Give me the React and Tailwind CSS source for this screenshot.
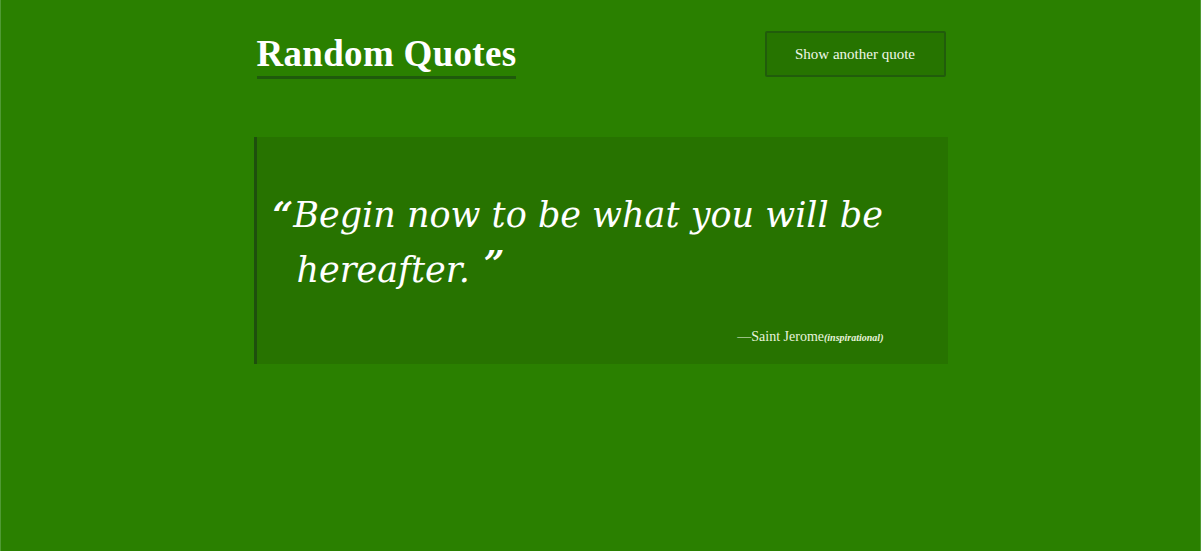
import React from "react";

const quote = {
    text: "Begin now to be what you will be hereafter.",
    author: "Saint Jerome",
    category: "inspirational",
};

const App = () => {
    return (
        <div className="min-h-[551px] w-full bg-[#2a8000] border-x border-[#4f9a33] font-['Liberation_Serif',serif] text-white">
            <div className="mx-auto w-[694px] pt-[31px]">
                <header className="flex items-start justify-between">
                    <h1 className="ml-[3px] mt-[3px] border-b-[3px] border-[#1f5a0c] pb-[2px] text-[37px] font-bold leading-[40px] tracking-[0.3px]">
                        Random Quotes
                    </h1>
                    <button className="mr-[2px] h-[46px] w-[181px] rounded-[2px] border-2 border-[#215c0b] bg-[#267400] text-[15px] text-[#f0f8e8]">
                        Show another quote
                    </button>
                </header>

                <blockquote className="mt-[58px] h-[227px] border-l-[3px] border-[#1e4f0d] bg-[#277300] pl-[40px] pr-[20px] pt-[53px]">
                    <p className="-indent-[24px] text-[35px] italic leading-[48px] font-['DejaVu_Serif',serif]">
                        <span className="text-[36px] font-bold">&ldquo;</span>
                        {quote.text}
                        <span className="ml-[14px] align-[6px] text-[36px] font-bold">&rdquo;</span>
                    </p>
                    <footer className="mt-[32px] pr-[44px] text-right text-[14px] text-[#e8f3dd]">
                        &mdash;{quote.author}
                        <span className="text-[10px] font-bold italic">({quote.category})</span>
                    </footer>
                </blockquote>
            </div>
        </div>
    );
};

export default App;
